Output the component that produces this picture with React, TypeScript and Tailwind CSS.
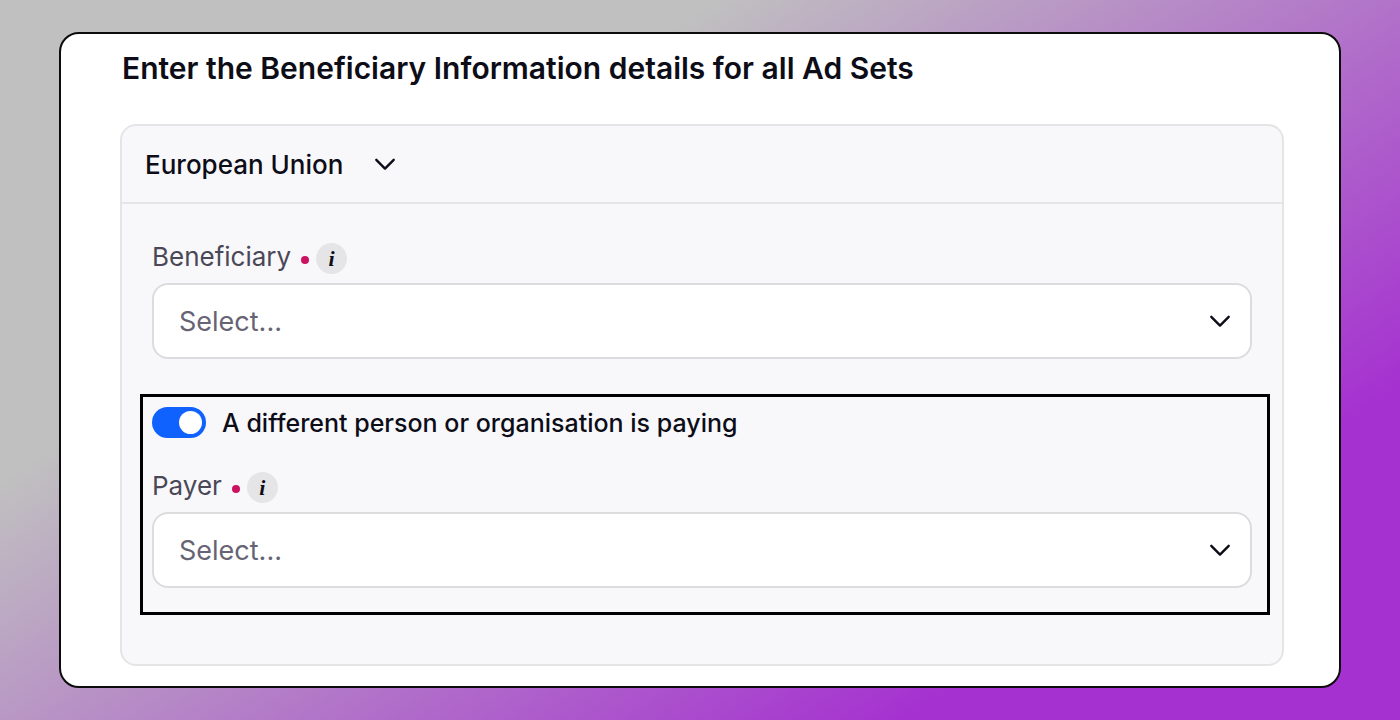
import { useState } from 'react';

function Chevron({ className }: { className?: string }) {
  return (
    <svg
      viewBox="0 0 24 24"
      className={className}
      fill="none"
      stroke="currentColor"
      strokeWidth="2.4"
      strokeLinecap="round"
      strokeLinejoin="round"
      aria-hidden="true"
    >
      <path d="M3.3 7.8 12 16.6l8.7-8.8" />
    </svg>
  );
}

interface SelectFieldProps {
  id: string;
  label: string;
}

function SelectField({ id, label }: SelectFieldProps) {
  return (
    <div>
      <div className="flex items-center mb-[9px]">
        <label htmlFor={id} className="flex items-center gap-[10px] pb-1 text-[26px] leading-[27px] text-[#4a4857]">
          {label}
          <span className="w-2 h-2 mt-[6px] rounded-full bg-[#cc1361]" />
        </label>
        <button
          type="button"
          title={`About ${label}`}
          className="ml-[7px] w-[31px] h-[31px] rounded-full bg-[#e5e5e7] flex items-center justify-center font-['Liberation_Serif',serif] italic font-bold text-[22px] leading-none text-[#0d0d18]"
        >
          i
        </button>
      </div>
      <div className="grid items-center">
        <select
          id={id}
          defaultValue=""
          className="col-start-1 row-start-1 w-full h-[76px] pt-0.5 pl-[25px] pr-16 appearance-none rounded-2xl border-2 border-[#dcdcde] bg-white text-[27px] text-[#666474]"
        >
          <option value="">Select...</option>
        </select>
        <Chevron className="col-start-1 row-start-1 justify-self-end mr-5 w-6 h-6 text-[#0d0d18] pointer-events-none" />
      </div>
    </div>
  );
}

export default function App() {
  const [isOpen, setIsOpen] = useState(true);
  const [otherPayer, setOtherPayer] = useState(true);

  return (
    <div className="min-h-screen px-[59px] py-8 flex flex-col bg-[linear-gradient(146deg,#c0c0c0_29%,#a531d0_80%)] font-[Inter,sans-serif] text-[#0d0d18]">
      <main className="flex-1 rounded-[20px] border-2 border-[#0c0c0c] bg-white pl-[59px] pr-[55px] pt-[14px] pb-5">
        <h1 className="pl-0.5 text-[30px] leading-10 font-semibold">
          Enter the Beneficiary Information details for all Ad Sets
        </h1>

        <section className="mt-9 rounded-2xl border-2 border-[#e5e5e7] bg-[#f8f8fb]">
          <button
            type="button"
            onClick={() => setIsOpen(!isOpen)}
            aria-expanded={isOpen}
            className="w-full h-[78px] px-[23px] flex items-center gap-[30px] border-b-2 border-[#e5e5e7] text-[26px] font-medium"
          >
            European Union
            <Chevron className="w-6 h-6" />
          </button>

          {isOpen && (
            <div className="pl-[18px] pr-3 pt-[39px] pb-[49px]">
              <div className="pl-3 pr-[18px]">
                <SelectField id="beneficiary" label="Beneficiary" />
              </div>

              {/* Payer */}
              <div className="mt-[35px] border-[3px] border-black pl-[9px] pr-[15px] pt-[10px] pb-6">
                <label className="flex items-center gap-4 mb-[34px] text-[25px] leading-[29px] font-medium">
                  <input
                    type="checkbox"
                    role="switch"
                    checked={otherPayer}
                    onChange={(e) => setOtherPayer(e.target.checked)}
                    className="appearance-none w-[54px] h-[31px] p-1 flex rounded-full bg-gray-400 checked:bg-[#0f62fe] checked:justify-end before:w-[23px] before:h-[23px] before:rounded-full before:bg-white"
                  />
                  <span className="pt-0.5">A different person or organisation is paying</span>
                </label>
                {otherPayer && <SelectField id="payer" label="Payer" />}
              </div>
            </div>
          )}
        </section>
      </main>
    </div>
  );
}
